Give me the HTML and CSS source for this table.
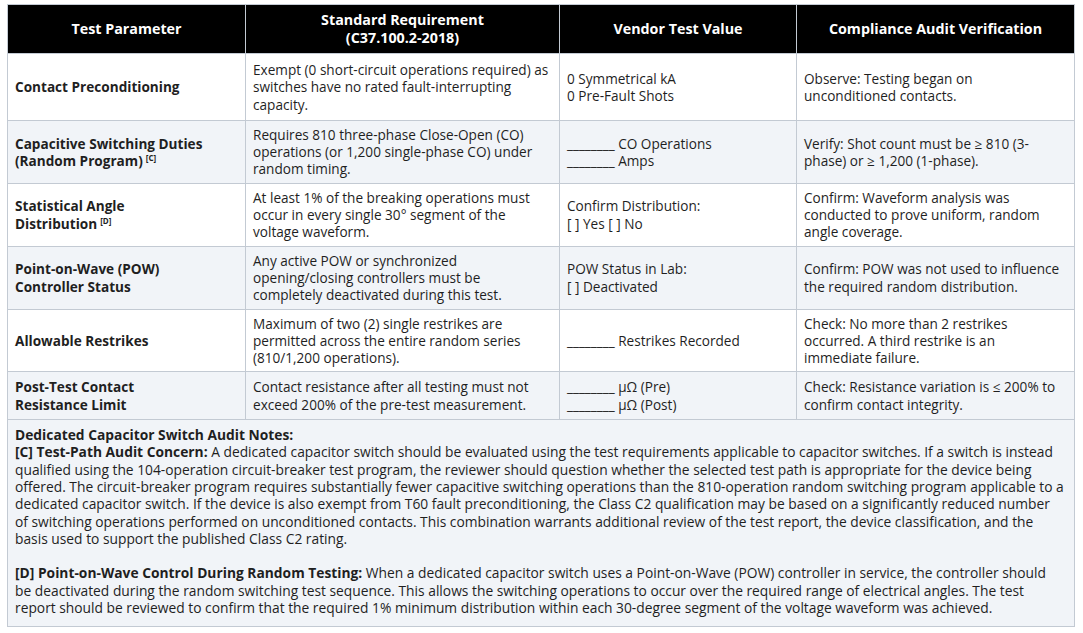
FILE: index.html
```html
<!DOCTYPE html>
<html lang="en">
<head>
    <meta charset="UTF-8">
    <meta name="viewport" content="width=device-width, initial-scale=1.0">
    <title>Capacitor Switch Audit Table</title>
    <link rel="stylesheet" href="styles.css">
</head>
<body>
    <!-- Audit Table -->
    <table class="audit">
        <colgroup>
            <col class="col-param">
            <col class="col-req">
            <col class="col-vendor">
            <col class="col-verify">
        </colgroup>
        <thead>
            <tr>
                <th>Test Parameter</th>
                <th>Standard Requirement<br>(C37.100.2-2018)</th>
                <th>Vendor Test Value</th>
                <th>Compliance Audit Verification</th>
            </tr>
        </thead>
        <tbody>
            <tr class="first">
                <td class="param">Contact Preconditioning</td>
                <td>Exempt (0 short-circuit operations required) as switches have no rated fault-interrupting capacity.</td>
                <td>0 Symmetrical kA<br>0 Pre-Fault Shots</td>
                <td>Observe: Testing began on unconditioned contacts.</td>
            </tr>
            <tr class="alt">
                <td class="param">Capacitive Switching Duties<br>(Random Program)<sup>[C]</sup></td>
                <td>Requires 810 three-phase Close-Open (CO) operations (or 1,200 single-phase CO) under random timing.</td>
                <td>________ CO Operations<br>________ Amps</td>
                <td>Verify: Shot count must be ≥ 810 (3-phase) or ≥ 1,200 (1-phase).</td>
            </tr>
            <tr>
                <td class="param">Statistical Angle<br>Distribution<sup>[D]</sup></td>
                <td>At least 1% of the breaking operations must occur in every single 30° segment of the voltage waveform.</td>
                <td>Confirm Distribution:<br>[ ] Yes [ ] No</td>
                <td>Confirm: Waveform analysis was conducted to prove uniform, random angle coverage.</td>
            </tr>
            <tr class="alt">
                <td class="param">Point-on-Wave (POW)<br>Controller Status</td>
                <td>Any active POW or synchronized opening/closing controllers must be completely deactivated during this test.</td>
                <td>POW Status in Lab:<br>[ ] Deactivated</td>
                <td>Confirm: POW was not used to influence the required random distribution.</td>
            </tr>
            <tr>
                <td class="param">Allowable Restrikes</td>
                <td>Maximum of two (2) single restrikes are permitted across the entire random series (810/1,200 operations).</td>
                <td>________ Restrikes Recorded</td>
                <td>Check: No more than 2 restrikes occurred. A third restrike is an<br>immediate failure.</td>
            </tr>
            <tr class="alt last">
                <td class="param">Post-Test Contact<br>Resistance Limit</td>
                <td>Contact resistance after all testing must not exceed 200% of the pre-test measurement.</td>
                <td>________ μΩ (Pre)<br>________ μΩ (Post)</td>
                <td>Check: Resistance variation is ≤ 200% to confirm contact integrity.</td>
            </tr>
            <!-- Notes Section -->
            <tr class="alt">
                <td class="notes" colspan="4">
                    <p class="note-title">Dedicated Capacitor Switch Audit Notes:</p>
                    <p><strong>[C] Test-Path Audit Concern:</strong> A dedicated capacitor switch should be evaluated using the test requirements applicable to capacitor switches. If a switch is instead<br>
                    qualified using the 104-operation circuit-breaker test program, the reviewer should question whether the selected test path is appropriate for the device being<br>
                    offered. The circuit-breaker program requires substantially fewer capacitive switching operations than the 810-operation random switching program applicable to a<br>
                    dedicated capacitor switch. If the device is also exempt from T60 fault preconditioning, the Class C2 qualification may be based on a significantly reduced number<br>
                    of switching operations performed on unconditioned contacts. This combination warrants additional review of the test report, the device classification, and the<br>
                    basis used to support the published Class C2 rating.</p>
                    <p class="note-gap"><strong>[D] Point-on-Wave Control During Random Testing:</strong> When a dedicated capacitor switch uses a Point-on-Wave (POW) controller in service, the controller should<br>
                    be deactivated during the random switching test sequence. This allows the switching operations to occur over the required range of electrical angles. The test<br>
                    report should be reviewed to confirm that the required 1% minimum distribution within each 30-degree segment of the voltage waveform was achieved.</p>
                </td>
            </tr>
        </tbody>
    </table>
</body>
</html>
```

FILE: styles.css
```css
body {
    margin: 0;
    padding: 4px 0 0 7px;
    font-family: 'Open Sans', 'Liberation Sans', sans-serif;
    font-size: 13.6px;
    color: #1f1f1f;
    background-color: #ffffff;
}

/* Audit Table */
.audit {
    width: 1067px;
    border-collapse: collapse;
    table-layout: fixed;
    line-height: 17.3px;
}

.col-param { width: 238px; }
.col-req { width: 314px; }
.col-vendor { width: 237px; }
.col-verify { width: 278px; }

.audit th,
.audit td {
    border: 1px solid #c3cad3;
    padding: 5px 7px;
    vertical-align: middle;
    text-align: left;
}

.audit th {
    background-color: #000000;
    color: #ffffff;
    font-size: 14.3px;
    font-weight: bold;
    text-align: center;
    line-height: 18px;
    padding-top: 6px;
    padding-bottom: 6px;
}

.audit tr.first td {
    padding-top: 7px;
    padding-bottom: 7px;
}

.audit tr.last td {
    padding-top: 6px;
    padding-bottom: 6px;
}

.audit tr.alt td {
    background-color: #f1f4f8;
}

.param {
    font-weight: bold;
}

.param sup {
    font-size: 8px;
    line-height: 8px;
    margin-left: 3px;
    vertical-align: 5px;
}

/* Notes */
.audit td.notes {
    font-size: 13.8px;
    padding: 6px 3px 10px 7px;
}

.notes p {
    margin: 0;
}

.note-title {
    font-weight: bold;
}

.notes .note-gap {
    margin-top: 17.3px;
}
```
